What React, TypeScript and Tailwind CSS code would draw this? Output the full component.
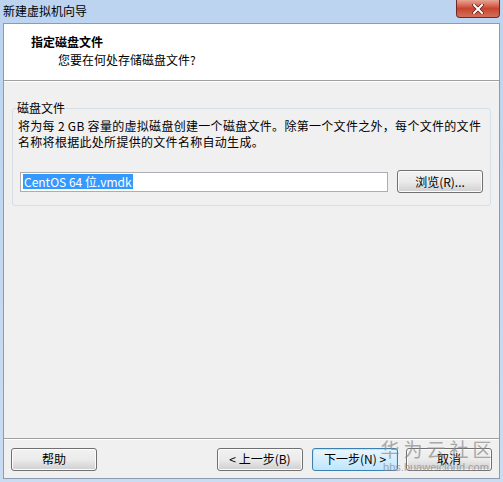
import React from "react";

const font = { fontFamily: '"Noto Sans CJK SC", "Liberation Sans", sans-serif' };

function WinButton({
  label,
  focused = false,
  className = "",
}: {
  label: string;
  focused?: boolean;
  className?: string;
}) {
  return (
    <button
      className={
        "h-[23px] w-[86px] rounded-[3px] border text-[12px] leading-none text-black " +
        (focused
          ? "border-[#3c7fb1] bg-gradient-to-b from-[#eaf6fd] to-[#bee6fd] shadow-[inset_0_0_0_1px_#bfe7fd] "
          : "border-[#707070] bg-gradient-to-b from-[#f2f2f2] via-[#ebebeb] to-[#cfcfcf] shadow-[inset_0_0_0_1px_#fcfcfc] ") +
        className
      }
    >
      {label}
    </button>
  );
}

export default function App() {
  return (
    <div
      className="relative w-[503px] h-[482px] overflow-hidden bg-gradient-to-b from-[#bcd4ef] to-[#c9dcf2] flex flex-col"
      style={font}
    >
      {/* caption */}
      <div className="h-[23px] flex items-start justify-between pl-[3px] pr-[3px]">
        <span className="text-[12px] leading-[22px] text-black">新建虚拟机向导</span>
        <div className="w-[44px] h-[18px] rounded-b-[4px] border border-t-0 border-[#6d2a2a] bg-gradient-to-b from-[#e8a493] via-[#c9432e] to-[#d0705b] flex items-center justify-center">
          <svg width="12" height="10" viewBox="0 0 12 10">
            <path d="M2 1 L10 9 M10 1 L2 9" stroke="#5a1d14" strokeWidth="3.4" strokeLinecap="square" />
            <path d="M2 1 L10 9 M10 1 L2 9" stroke="#ffffff" strokeWidth="2" strokeLinecap="square" />
          </svg>
        </div>
      </div>

      {/* client area */}
      <div className="flex-1 mx-[3px] mb-[3px] border border-[#8c9bb0] bg-[#f0f0f0] flex flex-col">
        <div className="h-[57px] bg-white border-b border-[#a0a0a0] pt-[9px] pl-[27px]">
          <div className="text-[12px] font-bold leading-[17px] text-black">指定磁盘文件</div>
          <div className="text-[12px] leading-[17px] pl-[27px] mt-[1px] text-black">您要在何处存储磁盘文件?</div>
        </div>
        <div className="h-px bg-white" />

        <div className="flex-1 px-[8px] pt-[18px]">
          <fieldset className="border border-[#d5dfe5] rounded-[3px] px-[5px] pb-[8px] h-[106px]">
            <legend className="text-[12px] leading-[16px] px-[1px] ml-[-2px] text-black">磁盘文件</legend>
            <p className="text-[12px] leading-[16px] text-black mt-[2px] tracking-[0.3px]">
              将为每 2 GB 容量的虚拟磁盘创建一个磁盘文件。除第一个文件之外，每个文件的文件名称将根据此处所提供的文件名称自动生成。
            </p>
            <div className="flex items-center mt-[20px]">
              <div className="ml-[2px] w-[368px] h-[20px] border border-[#abadb3] bg-white flex items-center pl-[2px]">
                <span className="bg-[#3399ff] text-white text-[12px] leading-[15px] px-[1px]">CentOS 64 位.vmdk</span>
              </div>
              <WinButton label="浏览(R)..." className="ml-[9px] w-[85px]" />
            </div>
          </fieldset>
        </div>

        <div className="h-px bg-[#a0a0a0]" />
        <div className="h-px bg-white" />
        <div className="h-[38px] flex items-center px-[7px]">
          <WinButton label="帮助" />
          <div className="flex-1" />
          <WinButton label="< 上一步(B)" />
          <WinButton label="下一步(N) >" focused className="ml-[9px]" />
          <WinButton label="取消" className="ml-[8px]" />
        </div>
      </div>

      {/* watermark */}
      <div className="pointer-events-none absolute left-[380px] top-[437px] w-[112px] flex flex-col items-center whitespace-nowrap text-[#8a8a8a] opacity-70">
        <span className="text-[19px] leading-[24px] tracking-[4px] pl-[4px]">华为云社区</span>
        <span className="text-[11px] leading-[12px]" style={{ fontFamily: '"Liberation Sans", sans-serif' }}>
          bbs.huaweicloud.com
        </span>
      </div>
    </div>
  );
}
